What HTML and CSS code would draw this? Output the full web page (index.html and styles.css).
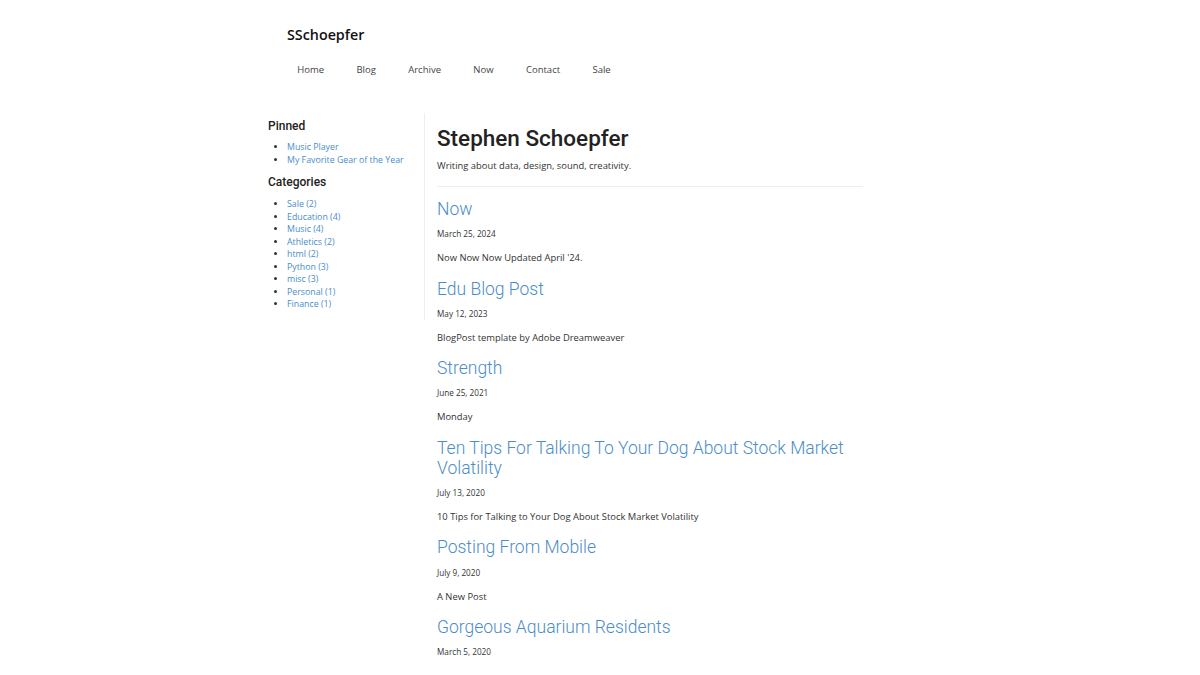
FILE: index.html
```html
<!DOCTYPE html>
<html lang="en">
<head>
<meta charset="utf-8">
<title>SSchoepfer</title>
<link rel="stylesheet" href="styles.css">
</head>
<body>
<header class="site-header">
  <a class="brand" href="#">SSchoepfer</a>
  <nav class="nav">
    <a href="#">Home</a>
    <a href="#">Blog</a>
    <a href="#">Archive</a>
    <a href="#">Now</a>
    <a href="#">Contact</a>
    <a href="#">Sale</a>
  </nav>
</header>
<div class="layout">
  <aside class="sidebar">
    <h3 class="side-title">Pinned</h3>
    <ul class="side-list">
      <li><a href="#">Music Player</a></li>
      <li><a href="#">My Favorite Gear of the Year</a></li>
    </ul>
    <h3 class="side-title">Categories</h3>
    <ul class="side-list">
      <li><a href="#">Sale (2)</a></li>
      <li><a href="#">Education (4)</a></li>
      <li><a href="#">Music (4)</a></li>
      <li><a href="#">Athletics (2)</a></li>
      <li><a href="#">html (2)</a></li>
      <li><a href="#">Python (3)</a></li>
      <li><a href="#">misc (3)</a></li>
      <li><a href="#">Personal (1)</a></li>
      <li><a href="#">Finance (1)</a></li>
    </ul>
  </aside>
  <main class="main">
    <h1 class="page-title">Stephen Schoepfer</h1>
    <p class="tagline">Writing about data, design, sound, creativity.</p>
    <hr class="divider">
    <article class="post">
      <h2 class="post-title"><a href="#">Now</a></h2>
      <p class="post-date">March 25, 2024</p>
      <p class="post-excerpt">Now Now Now Updated April '24.</p>
    </article>
    <article class="post">
      <h2 class="post-title"><a href="#">Edu Blog Post</a></h2>
      <p class="post-date">May 12, 2023</p>
      <p class="post-excerpt">BlogPost template by Adobe Dreamweaver</p>
    </article>
    <article class="post">
      <h2 class="post-title"><a href="#">Strength</a></h2>
      <p class="post-date">June 25, 2021</p>
      <p class="post-excerpt">Monday</p>
    </article>
    <article class="post">
      <h2 class="post-title"><a href="#">Ten Tips For Talking To Your Dog About Stock Market Volatility</a></h2>
      <p class="post-date">July 13, 2020</p>
      <p class="post-excerpt">10 Tips for Talking to Your Dog About Stock Market Volatility</p>
    </article>
    <article class="post">
      <h2 class="post-title"><a href="#">Posting From Mobile</a></h2>
      <p class="post-date">July 9, 2020</p>
      <p class="post-excerpt">A New Post</p>
    </article>
    <article class="post">
      <h2 class="post-title"><a href="#">Gorgeous Aquarium Residents</a></h2>
      <p class="post-date">March 5, 2020</p>
    </article>
  </main>
</div>
</body>
</html>
```
FILE: styles.css
```css
* { box-sizing: border-box; }
html, body { margin: 0; padding: 0; background: #fff; }
body {
  font-family: "Open Sans", "Liberation Sans", sans-serif;
  font-size: 10px;
  color: #333;
}
a { text-decoration: none; }

.site-header {
  width: 664px;
  margin: 0 auto;
  padding: 25px 0 0 19px;
  display: flex;
  flex-direction: column;
}
.brand {
  font-family: "Open Sans", sans-serif;
  font-weight: 600;
  font-size: 14.3px;
  line-height: 20px;
  color: #111;
}
.nav {
  display: flex;
  margin-top: 18px;
  margin-left: -6px;
}
.nav a {
  padding: 0 16.2px;
  font-size: 9.5px;
  line-height: 14px;
  color: #444;
}

.layout {
  width: 664px;
  margin: 36px auto 0;
  display: flex;
  align-items: flex-start;
}
.sidebar {
  width: 157px;
  flex: none;
  border-right: 1px solid #eee;
  padding-top: 6px;
  padding-bottom: 0;
}
.side-title {
  font-family: Roboto, "Liberation Sans", sans-serif;
  font-weight: 500;
  font-size: 12px;
  line-height: 14px;
  margin: 0 0 8px;
  color: #222;
}
.side-list {
  margin: 0 0 9px;
  padding-left: 19px;
  font-size: 8.8px;
  line-height: 12.5px;
}
.side-list + .side-title { margin-bottom: 9px; }
.side-list li { color: #333; }
.side-list a { color: #4a8dc8; }

.main {
  width: 426px;
  margin-left: 12px;
  flex: none;
}
.page-title {
  font-family: Roboto, "Liberation Sans", sans-serif;
  font-weight: 500;
  font-size: 22.5px;
  line-height: 28px;
  margin: 11px 0 6px;
  color: #222;
}
.tagline {
  margin: 0;
  font-size: 9.4px;
  line-height: 14px;
  padding-top: 1px;
}
.divider {
  border: 0;
  border-top: 1px solid #eee;
  margin: 13px 0 12px;
}
.post-title {
  font-family: Roboto, "Liberation Sans", sans-serif;
  font-weight: 300;
  font-size: 17.5px;
  line-height: 20px;
  margin: 0;
}
.post-title a { color: #4a8dc8; }
.post-date {
  font-size: 8.2px;
  line-height: 12px;
  margin: 9.3px 0 0;
  color: #333;
}
.post-excerpt {
  font-size: 9.4px;
  line-height: 14px;
  margin: 11px 0 13.3px;
}
```
